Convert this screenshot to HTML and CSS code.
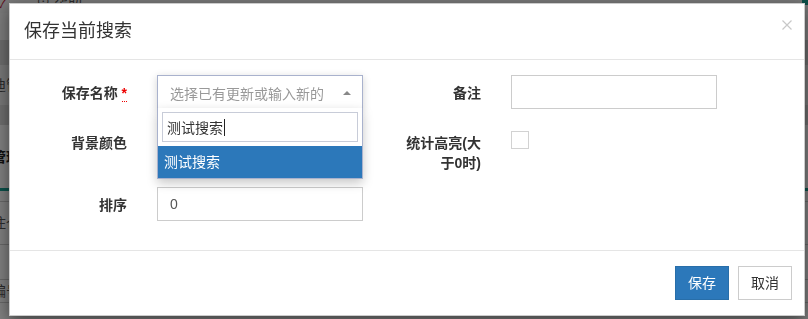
FILE: index.html
```html
<!DOCTYPE html>
<html lang="zh">
<head>
<meta charset="utf-8">
<title>保存当前搜索</title>
<link rel="stylesheet" href="styles.css">
</head>
<body>
<div class="page">
  <div class="band topbar"><span class="mark">✓</span><span class="help">⊙ 帮助</span><span class="corner"></span></div>
  <div class="band b1"></div>
  <div class="band b2"></div>
  <div class="band b3"><span class="frag">迪管理</span></div>
  <div class="band b4"></div>
  <div class="band b5"><span class="frag strong">管理</span></div>
  <div class="band teal"></div>
  <div class="band r1"></div>
  <div class="band r2"><span class="frag">住仓</span></div>
  <div class="band r3"></div>
  <div class="band r4"><span class="frag">编号</span></div>
  <div class="band r5"></div>
</div>
<div class="backdrop"></div>

<div class="modal">
  <div class="modal-header">
    <h4 class="modal-title">保存当前搜索</h4>
    <button class="close" type="button" aria-label="关闭">
      <svg width="10" height="10" viewBox="0 0 10 10"><path d="M0.5 0.5 L9.5 9.5 M9.5 0.5 L0.5 9.5" stroke="#c8c8c8" stroke-width="1.2" fill="none"/></svg>
    </button>
  </div>
  <div class="modal-body">
    <form class="form-grid">
      <label class="lbl">保存名称 <abbr class="req" title="必填">*</abbr></label>
      <div class="ctl select-wrap">
        <div class="select2">
          <span class="placeholder">选择已有更新或输入新的</span>
          <span class="arrow"></span>
        </div>
        <div class="dropdown">
          <div class="search"><span class="typed">测试搜索</span><span class="caret"></span></div>
          <div class="option">测试搜索</div>
        </div>
      </div>
      <label class="lbl">备注</label>
      <div class="ctl"><input class="input" type="text"></div>

      <label class="lbl">背景颜色</label>
      <div class="ctl"></div>
      <label class="lbl">统计高亮(大<br>于0时)</label>
      <div class="ctl"><span class="checkbox"></span></div>

      <label class="lbl">排序</label>
      <div class="ctl"><input class="input" type="text" value="0"></div>
    </form>
  </div>
  <div class="modal-footer">
    <button class="btn btn-primary" type="button">保存</button>
    <button class="btn btn-default" type="button">取消</button>
  </div>
</div>
</body>
</html>
```

FILE: styles.css
```css
* { box-sizing: border-box; }
html, body { margin: 0; padding: 0; }
body {
  width: 808px;
  height: 319px;
  overflow: hidden;
  background: #fff;
  font-family: "Liberation Sans", "Noto Sans CJK SC", sans-serif;
  font-size: 14px;
  color: #333;
}

/* underlying page (dimmed) */
.page { display: flex; flex-direction: column; height: 319px; overflow: hidden; }
.band { position: relative; display: flex; align-items: center; flex: none; overflow: hidden; }
.topbar { height: 13px; background: #f2f2f2; }
.topbar .mark { color: #c0243a; font-size: 12px; margin-left: -2px; line-height: 8px; align-self: flex-start; }
.topbar .help { margin-left: 30px; color: #555; font-size: 14px; line-height: 10px; align-self: flex-start; margin-top: -4px; }
.topbar .corner { margin-left: auto; width: 6px; height: 5px; background: #1a9e90; align-self: flex-start; }
.b1 { height: 27px; background: #f7f7f7; }
.b2 { height: 25px; background: #d8d8d8; }
.b3 { height: 40px; background: #f0f0f0; }
.b4 { height: 20px; background: #dcdcdc; }
.b5 { height: 63px; background: #fff; }
.teal { height: 3px; background: #17a093; }
.r1 { height: 11px; background: #fff; border-bottom: 1px solid #cfcfcf; }
.r2 { height: 43px; background: #fff; border-bottom: 1px solid #cfcfcf; }
.r3 { height: 35px; background: #fff; border-bottom: 1px solid #cfcfcf; }
.r4 { height: 23px; background: #fff; border-bottom: 1px solid #cfcfcf; }
.r5 { height: 16px; background: #fff; }
.frag { margin-left: -8px; color: #555; font-size: 14px; line-height: 16px; }
.frag.strong { font-weight: bold; color: #222; }

.backdrop {
  position: fixed;
  inset: 0;
  background: rgba(0, 0, 0, 0.5);
}

/* modal */
.modal {
  position: fixed;
  left: 9px;
  top: 3px;
  width: 796px;
  background: #fff;
  border: 1px solid rgba(0, 0, 0, 0.2);
  box-shadow: 0 5px 15px rgba(0, 0, 0, 0.5);
}
.modal-header {
  display: flex;
  align-items: flex-start;
  justify-content: space-between;
  padding: 15px 12px 15px 14px;
  border-bottom: 1px solid #e5e5e5;
}
.modal-title {
  margin: 0;
  font-size: 18px;
  line-height: 25px;
  font-weight: normal;
  color: #333;
}
.close {
  border: 0;
  background: none;
  padding: 0;
  margin-top: 1px;
  width: 10px;
  height: 10px;
  display: flex;
}

.modal-body { padding: 15px 15px 29px 14px; }
.form-grid {
  display: grid;
  grid-template-columns: 103px 206px 88px 206px;
  grid-template-rows: 34px 46px 34px;
  column-gap: 30px;
  row-gap: 16px;
  margin: 0;
}
.lbl {
  font-weight: bold;
  text-align: right;
  padding-top: 8px;
  line-height: 20px;
  color: #333;
}
.req {
  color: #e00;
  text-decoration: none;
  border-bottom: 1px dotted #e00;
  padding-bottom: 0;
}
.ctl { position: relative; }

.input {
  display: block;
  width: 100%;
  height: 34px;
  margin: 0;
  padding: 6px 12px;
  border: 1px solid #ccc;
  border-radius: 0;
  font-family: inherit;
  font-size: 14px;
  color: #555;
  background: #fff;
  outline: none;
}

.checkbox {
  display: block;
  width: 18px;
  height: 18px;
  margin-top: 6px;
  border: 1px solid #d2d2d2;
  background: #fff;
}

/* select2-like */
.select2 {
  height: 34px;
  display: flex;
  align-items: center;
  padding: 0 11px 0 12px;
  border: 1px solid #a9b2cd;
  border-bottom: 0;
  background: #fff;
  box-shadow: 0 2px 8px rgba(0, 0, 0, 0.18);
}
.placeholder { color: #999; flex: 1; }
.arrow {
  width: 0;
  height: 0;
  border-left: 4px solid transparent;
  border-right: 4px solid transparent;
  border-bottom: 4px solid #888;
}
.dropdown {
  position: absolute;
  left: 0;
  right: 0;
  top: 33px;
  background: #fff;
  border: 1px solid #a9b2cd;
  border-top: 0;
  padding-top: 4px;
  box-shadow: 0 4px 10px rgba(0, 0, 0, 0.22);
  z-index: 2;
}
.search {
  margin: 0 4px;
  height: 30px;
  border: 1px solid #c8ccd8;
  display: flex;
  align-items: center;
  padding-left: 4px;
  color: #333;
}
.caret {
  display: inline-block;
  width: 1px;
  height: 17px;
  background: #222;
  margin-left: 1px;
}
.option {
  margin-top: 4px;
  height: 32px;
  line-height: 32px;
  padding-left: 6px;
  background: #2c78ba;
  color: #fff;
}

.modal-footer {
  display: flex;
  justify-content: flex-end;
  gap: 9px;
  padding: 15px 12px 15px 15px;
  border-top: 1px solid #e5e5e5;
}
.btn {
  height: 34px;
  padding: 6px 12px;
  font-family: inherit;
  font-size: 14px;
  line-height: 20px;
  border: 1px solid #ccc;
  border-radius: 0;
  background: #fff;
  color: #333;
}
.btn-primary {
  background: #2c78ba;
  border-color: #286ea9;
  color: #fff;
}
```
